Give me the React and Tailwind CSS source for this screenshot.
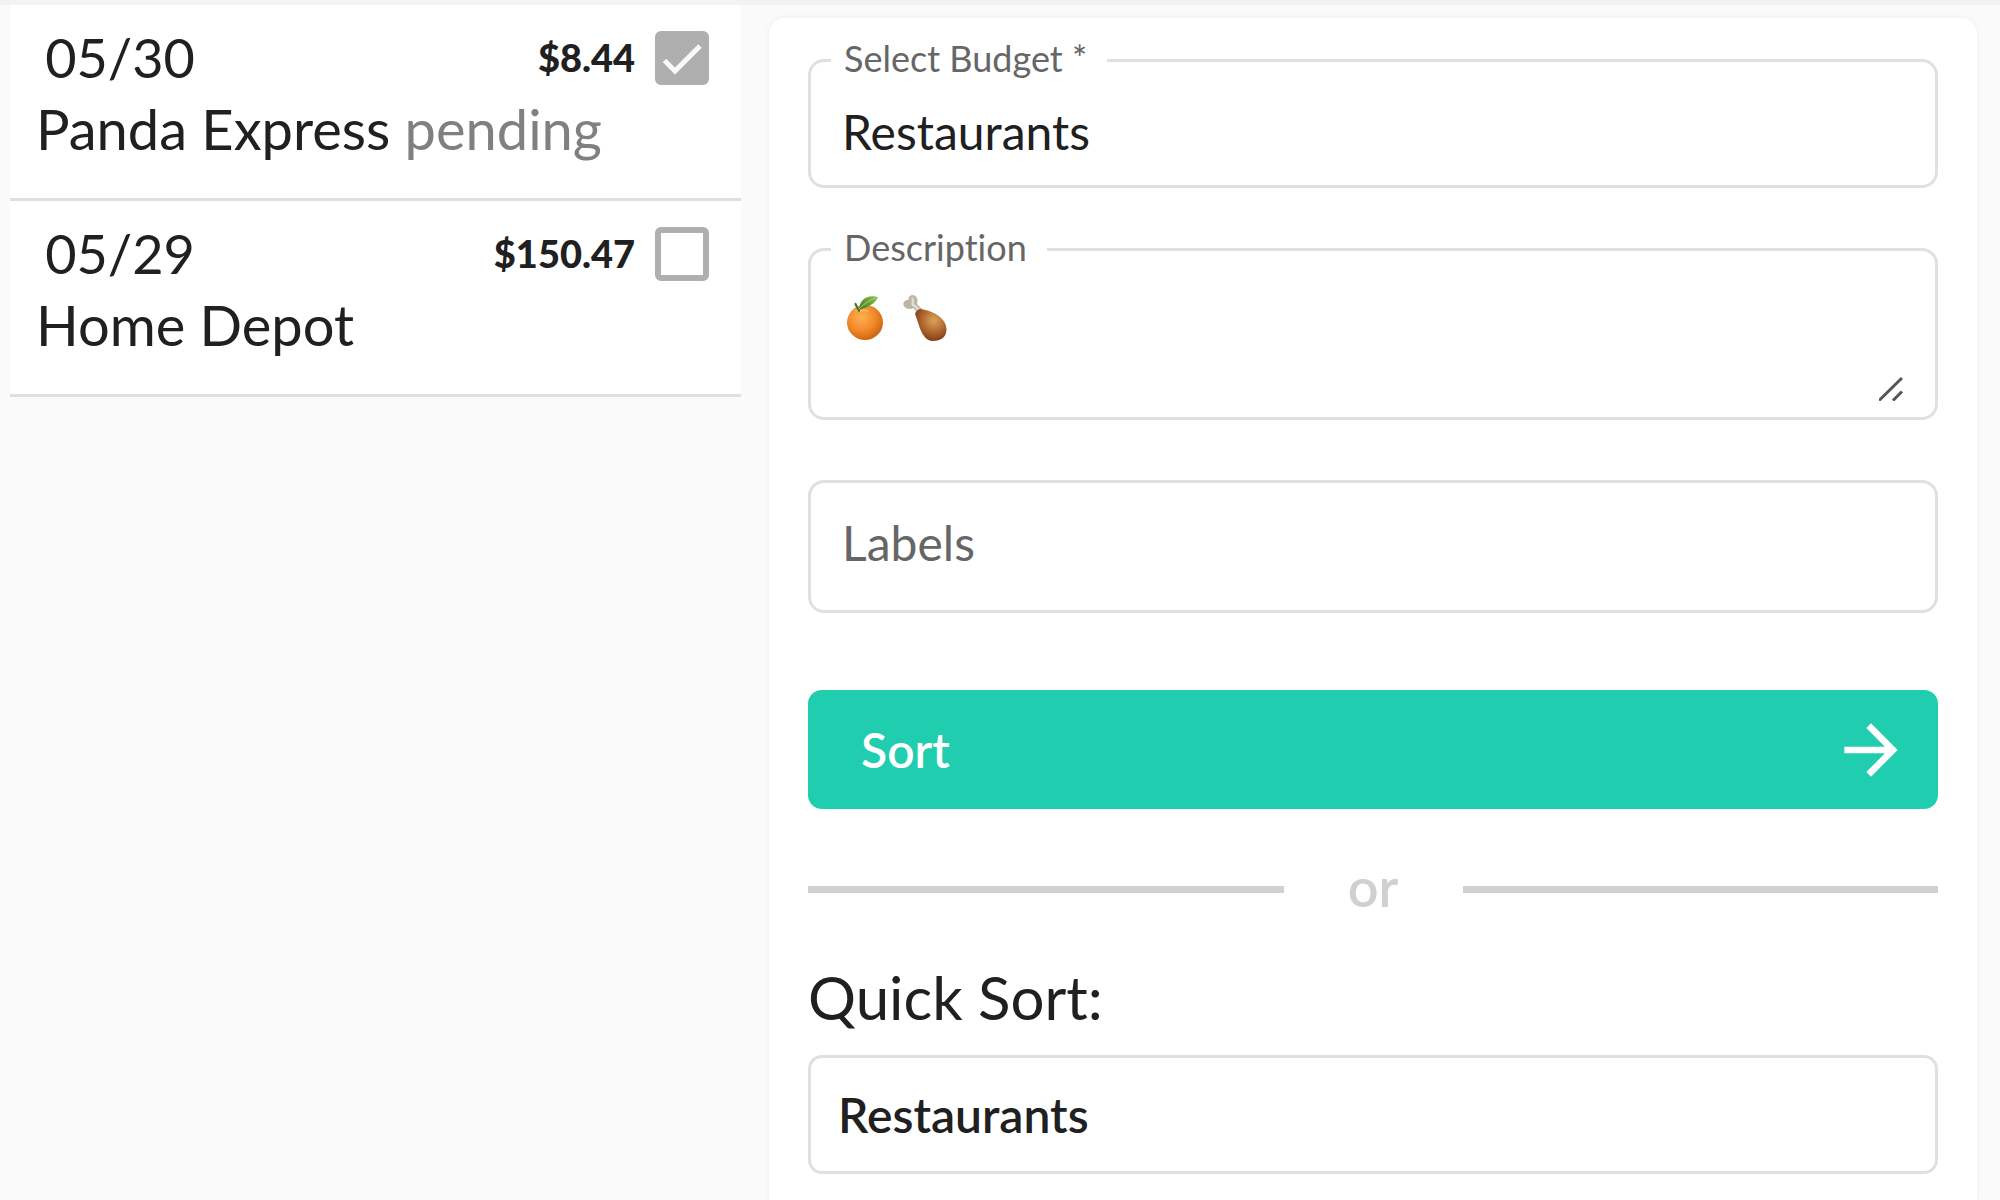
import { useState } from "react";
import { MdArrowForward } from "react-icons/md";

const initialTransactions = [
	{ id: 1, date: "05/30", name: "Panda Express", amount: "$8.44", pending: true, checked: true },
	{ id: 2, date: "05/29", name: "Home Depot", amount: "$150.47", pending: false, checked: false },
];

function Transaction({ item, onToggle }) {
	return (
		<li className="bg-white border-b-3 border-[#dfdfdf] h-49 pl-6.5 pr-8 pt-6.5">
			<div className="flex items-center justify-between h-[54px]">
				<span className="w-42 text-center text-[54px] leading-14">{item.date}</span>
				<div className="flex items-center gap-5">
					<span className="text-[38px] leading-[50px] pb-0.5 font-black">{item.amount}</span>
					<span className="relative flex">
						<input
							type="checkbox"
							aria-label={item.name}
							checked={item.checked}
							onChange={() => onToggle(item.id)}
							className="appearance-none size-[54px] rounded-md border-6 border-[#afafaf] checked:bg-[#afafaf]"
						/>
						{item.checked && (
							<svg viewBox="0 0 54 54" className="absolute inset-0 size-full pointer-events-none" fill="none">
								<path d="M9.5 29.5 20 40 45 15" stroke="#fafafa" strokeWidth="5" />
							</svg>
						)}
					</span>
				</div>
			</div>
			<p className="text-[56px] leading-[72px] pt-2">
				{item.name} {item.pending && <span className="text-[#808080]">pending</span>}
			</p>
		</li>
	);
}

function OutlinedField({ label, htmlFor, className, children }) {
	return (
		<div className={`relative border-3 border-[#e0e0e0] rounded-2xl ${className}`}>
			{label && (
				<label
					htmlFor={htmlFor}
					className="absolute left-5 -top-6 bg-white pl-[13px] pr-5 text-4xl leading-10 text-[#666]"
				>
					{label}
				</label>
			)}
			{children}
		</div>
	);
}

function Tangerine() {
	return (
		<svg viewBox="0 0 36 46" className="w-9 h-[46px]">
			<defs>
				<radialGradient id="peel" cx="0.4" cy="0.35" r="0.7">
					<stop offset="0" stopColor="#ffb052" />
					<stop offset="0.55" stopColor="#f08a2a" />
					<stop offset="1" stopColor="#c9600f" />
				</radialGradient>
				<linearGradient id="leaf" x1="0" y1="1" x2="1" y2="0">
					<stop offset="0" stopColor="#3f7a1d" />
					<stop offset="1" stopColor="#8cc152" />
				</linearGradient>
			</defs>
			<ellipse cx="18" cy="27.5" rx="18" ry="17.5" fill="url(#peel)" />
			<path d="M7 16c3-3 6-2 8-1 3-1 6 0 7 2-4-1-6-1-8 0-2 0-4-1-7-1z" fill="#ffd27a" opacity="0.6" />
			<path d="M12 15C12 6 19-1 31 2c-3 7-10 10-19 13z" fill="url(#leaf)" />
			<path d="M12 14C18 8 23 5 29 3" fill="none" stroke="#b9dc83" strokeWidth="0.8" />
			<path d="M12 16 8.5 9" stroke="#4a7a22" strokeWidth="2.2" strokeLinecap="round" />
		</svg>
	);
}

function Drumstick() {
	return (
		<svg viewBox="0 0 44 46" className="w-11 h-[46px]">
			<defs>
				<radialGradient id="meat" cx="0.6" cy="0.35" r="0.75">
					<stop offset="0" stopColor="#dba35c" />
					<stop offset="0.5" stopColor="#b0682f" />
					<stop offset="1" stopColor="#6f3113" />
				</radialGradient>
			</defs>
			<path
				d="M11 14 16 19 19 14 14 9C16 4 13 0 9.5 0 6.5 0 5 3 5.5 5 2 4.5 0 7 .5 10c1 4 6.5 5 10.5 3z"
				fill="#bfb6ab"
			/>
			<path d="M9 3c2 2 0 5 1 7 3 1 4 3 6 5" fill="none" stroke="#e6dfd6" strokeWidth="2.2" />
			<path
				d="M12 19C13 16 15 14 18 14 29 16 43 22 43.5 34c0 8-5 12-14 12C18 45 16 28 12 19z"
				fill="url(#meat)"
			/>
		</svg>
	);
}

export default function App() {
	const [transactions, setTransactions] = useState(initialTransactions);

	const toggle = (id) =>
		setTransactions((prev) => prev.map((t) => (t.id === id ? { ...t, checked: !t.checked } : t)));

	return (
		<div className="min-h-screen flex flex-col bg-[#fafafa] text-[#202020] font-['Lato',sans-serif] [font-variant-ligatures:none]">
			<div className="h-[5px] bg-[#f3f3f3]" />
			<main className="grow grid grid-cols-[23fr_38fr] gap-7 pl-2.5 pr-[23px]">
				<ul>
					{transactions.map((item) => (
						<Transaction key={item.id} item={item} onToggle={toggle} />
					))}
				</ul>

				<form
					className="mt-[13px] bg-white rounded-t-2xl px-[39px] pt-[41px] pb-6 shadow-[0_0_6px_rgba(0,0,0,0.05)]"
					onSubmit={(e) => e.preventDefault()}
				>
					<OutlinedField label="Select Budget *" htmlFor="budget" className="h-[129px]">
						<select
							id="budget"
							className="appearance-none w-full h-full px-[31px] pt-4 text-5xl bg-transparent outline-none"
						>
							<option>Restaurants</option>
						</select>
					</OutlinedField>

					<OutlinedField label="Description" htmlFor="description" className="mt-15 h-[172px]">
						<textarea
							id="description"
							className="block w-full h-full resize-none px-8 pt-10 text-5xl bg-transparent outline-none"
						/>
						<div className="absolute left-9 top-11 flex gap-5 pointer-events-none">
							<Tangerine />
							<Drumstick />
						</div>
						<svg
							viewBox="0 0 24 24"
							className="absolute right-8 bottom-4 size-6 pointer-events-none"
							fill="none"
							stroke="#555"
							strokeWidth="3"
						>
							<path d="M0 23.5 23 1M14 23.5l9-9" />
						</svg>
					</OutlinedField>

					<OutlinedField className="mt-15 h-[133px]">
						<input
							type="text"
							aria-label="Labels"
							placeholder="Labels"
							className="w-full h-full px-[31px] pb-2 text-5xl bg-transparent outline-none placeholder:text-[#666]"
						/>
					</OutlinedField>

					<button
						type="submit"
						className="mt-[77px] w-full h-[119px] flex items-center justify-between rounded-[14px] bg-[#20ceaf] pl-[53px] pr-[27px] text-5xl font-semibold text-white"
					>
						Sort
						<MdArrowForward className="size-20" />
					</button>

					<div className="mt-[42px] flex items-center h-19 text-[54px] leading-19 font-semibold text-[#d0d0d0]">
						<span className="grow h-[7px] bg-[#d0d0d0]" />
						<span className="w-[179px] pb-1 text-center">or</span>
						<span className="grow h-[7px] bg-[#d0d0d0]" />
					</div>

					<h2 className="mt-[34px] text-6xl leading-18">Quick Sort:</h2>
					<button
						type="button"
						className="mt-[22px] w-full h-[119px] rounded-[14px] border-3 border-[#e0e0e0] px-[27px] text-left text-5xl font-semibold"
					>
						Restaurants
					</button>
				</form>
			</main>
		</div>
	);
}
